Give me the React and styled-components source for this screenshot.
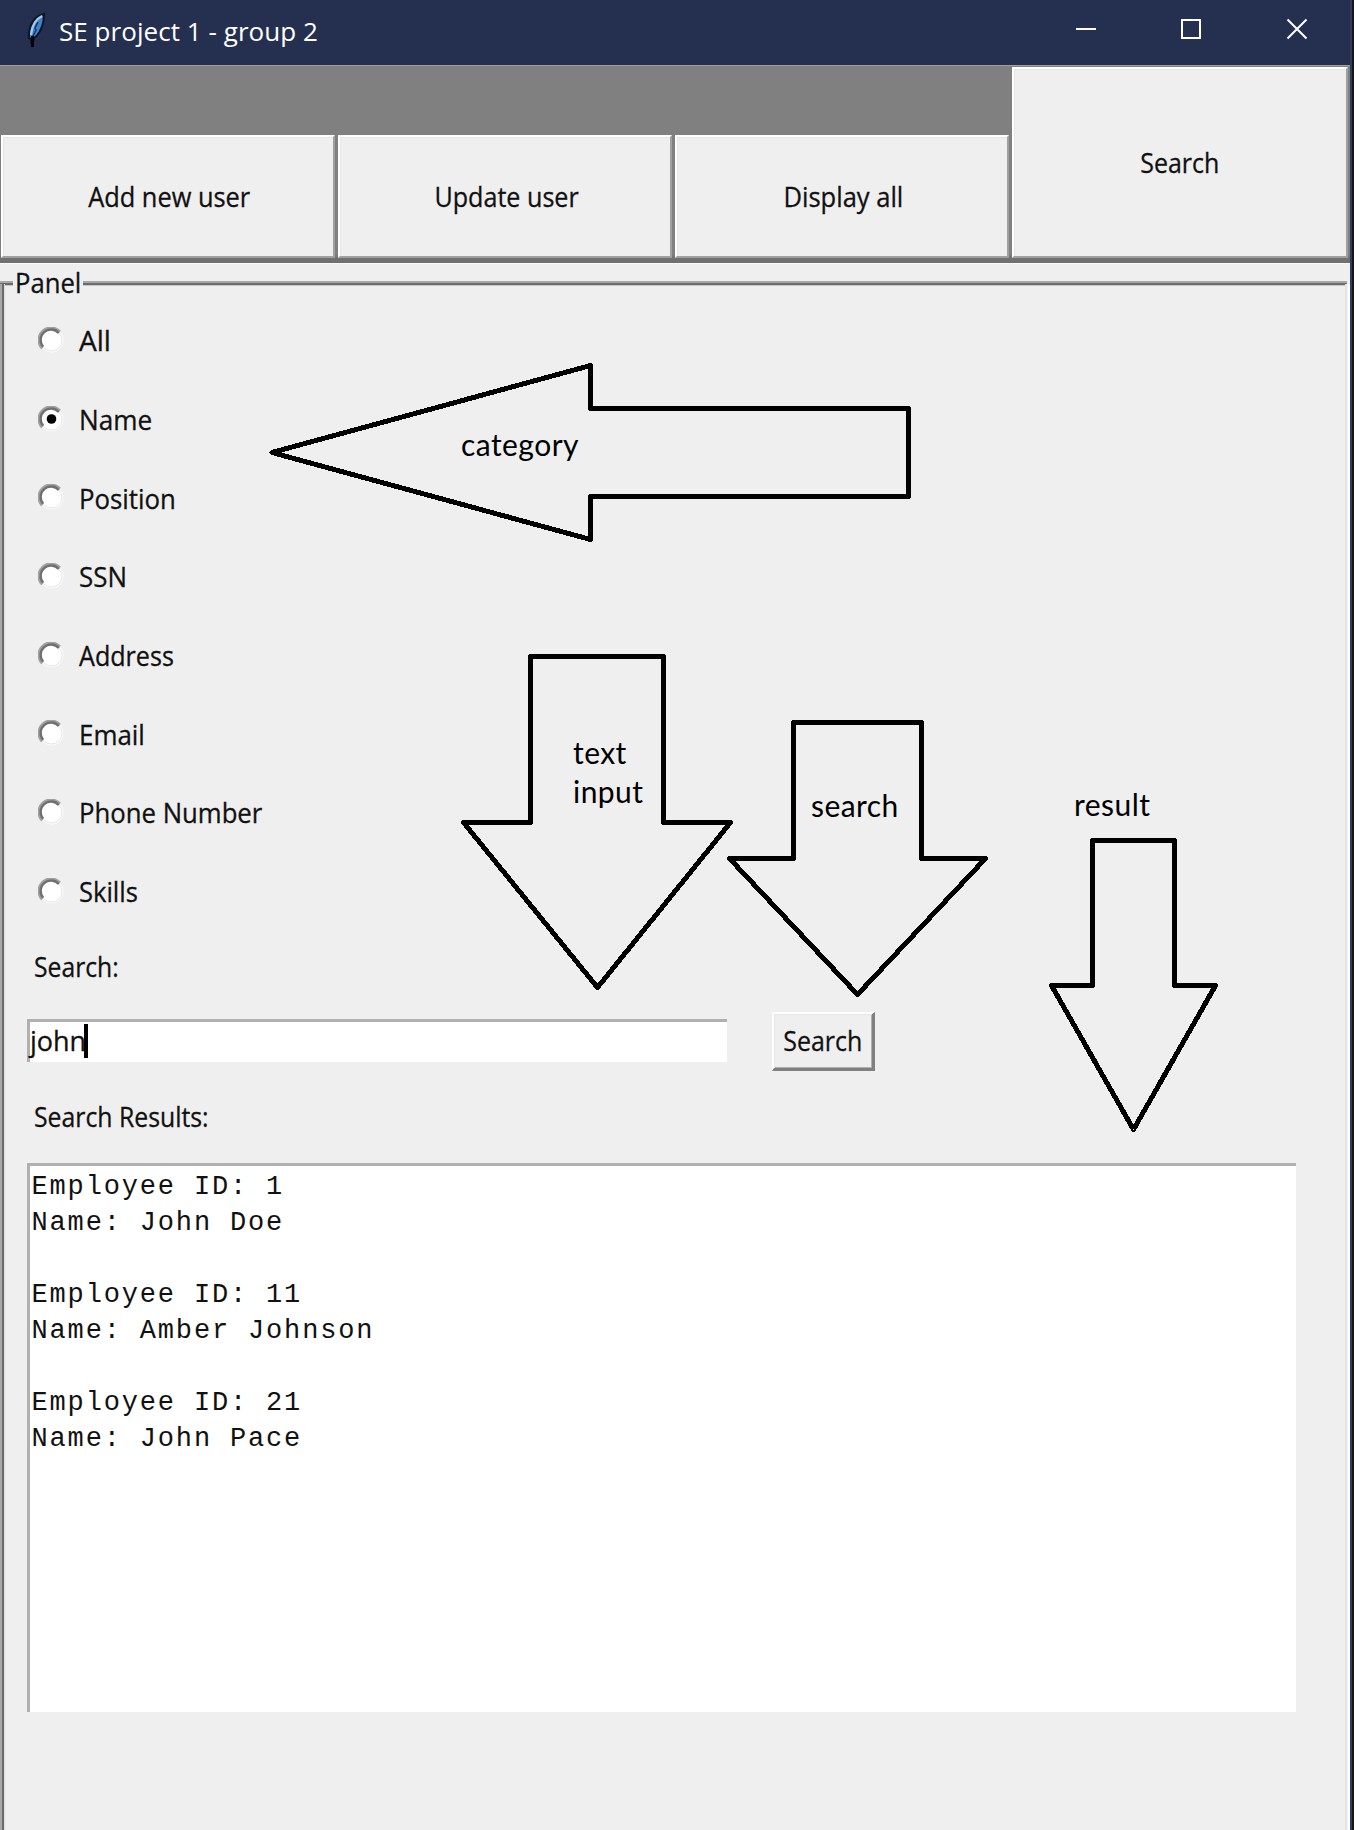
import React from "react";
import styled, { createGlobalStyle } from "styled-components";

const GlobalStyle = createGlobalStyle`
  * { box-sizing: border-box; }
  html, body { margin: 0; padding: 0; background: #141414; }
  body { width: 1354px; height: 1830px; overflow: hidden; }
`;

const Screen = styled.div`
  display: flex;
  width: 1354px;
  height: 1830px;
  background: #161616;
  font-family: "Open Sans", "Noto Sans", sans-serif;
  font-size: 27px;
  line-height: 36px;
  color: #111;
`;

const Window = styled.div`
  position: relative;
  display: flex;
  flex-direction: column;
  width: 1352px;
  height: 1830px;
  border-right: 2px solid #2f3c5e;
  background: #efefef;
`;

const TitleBar = styled.header`
  display: flex;
  align-items: center;
  height: 65px;
  flex: none;
  padding: 0 42px 0 24px;
  background: #253050;
  color: #fff;
`;

const FeatherIcon = styled.svg`
  width: 24px;
  height: 38px;
  margin-top: -5px;
`;

const Title = styled.h1`
  flex: 1;
  margin: -3px 0 0 11px;
  font-size: 26px;
  font-weight: 400;
  line-height: 36px;
  letter-spacing: 0.05px;
`;

const WindowControls = styled.div`
  display: flex;
  gap: 84px;
  margin-top: -7px;
`;

const ControlIcon = styled.svg`
  width: 22px;
  height: 22px;
  fill: none;
  stroke: #fff;
  stroke-width: 2;
`;

const Fit = styled.span`
  display: inline-block;
  white-space: pre;
  -webkit-text-stroke: 0.3px currentColor;
  transform: scaleX(${(p) => p.$x || 1});
  transform-origin: ${(p) => p.$from || "left"} center;
`;

const Toolbar = styled.nav`
  display: grid;
  grid-template-columns: 337px 337px 337px 337px;
  align-items: end;
  flex: none;
  height: 199px;
  padding: 1px 2px 5px 0;
  border-top: 1px solid #a0a0a0;
  border-bottom: 1px solid #fafafa;
  background: linear-gradient(#808080 188px, #707070 192px);
`;

const RaisedButton = styled.button`
  display: flex;
  align-items: center;
  justify-content: center;
  padding: 0;
  border: 2px solid #fff;
  border-right-color: #a0a0a0;
  border-bottom-color: #a0a0a0;
  background: #efefef;
  box-shadow: inset 1px 1px 0 #e6e6e6;
  color: inherit;
  font: inherit;
`;

const ToolButton = styled(RaisedButton)`
  height: ${(p) => (p.$tall ? 191 : 123)}px;
  margin-left: 1px;
  margin-right: ${(p) => (p.$tall ? 0 : 2)}px;
  padding: ${(p) => (p.$tall ? "0" : "1px 0 0 3px")};
`;

const Panel = styled.section`
  display: flex;
  flex-direction: column;
  flex: 1;
`;

const PanelHeader = styled.div`
  display: flex;
  align-items: center;
  height: 37px;
`;

const Rule = styled.span`
  height: 5px;
  margin-top: 2px;
  width: ${(p) => p.$w || "auto"};
  flex: ${(p) => (p.$w ? "none" : 1)};
  background: linear-gradient(#a8a8a8 2px, #6c6c6c 2px, #6c6c6c 4px, #c8c8c8 4px);
`;

const PanelTitle = styled.h2`
  width: 70px;
  padding-left: 2px;
  margin: 0;
  font-size: inherit;
  font-weight: 400;
`;

const HeaderEnd = styled.span`
  width: 3px;
`;

const PanelBody = styled.div`
  display: flex;
  flex: 1;
  margin-top: -17px;
`;

const LeftEdge = styled.div`
  width: 5px;
  background: linear-gradient(90deg, #a8a8a8 2px, #6c6c6c 2px, #6c6c6c 4px, #dcdcdc 4px);
`;

const RightEdge = styled.div`
  width: 5px;
  background: linear-gradient(90deg, #e4e4e4 2px, #fff 3px);
`;

const Content = styled.div`
  flex: 1;
  padding: 18px 0 0 22px;
`;

const RadioList = styled.div`
  display: grid;
  grid-template-rows: repeat(8, 78.7px);
  padding-left: 11px;
`;

const RadioRow = styled.label`
  display: flex;
  align-items: center;
  gap: 14.5px;
`;

const RadioGlyph = styled.svg`
  width: 26px;
  height: 26px;
  margin-top: -3px;
`;

const FieldLabel = styled.div`
  height: 36px;
  margin-top: ${(p) => p.$top}px;
  padding-left: 7px;
`;

const SearchRow = styled.div`
  display: flex;
  align-items: flex-start;
  height: 59px;
  margin-top: 27px;
`;

const Entry = styled.div`
  display: flex;
  align-items: center;
  width: 700px;
  height: 43px;
  margin: 7px 45px 0 0;
  padding-bottom: 2px;
  border: solid #b0b0b0;
  border-width: 3px 0 0 3px;
  background: #fff;
`;

const Caret = styled.span`
  width: 4px;
  height: 34px;
  margin-left: -2px;
  background: #000;
`;

const SearchButton = styled(RaisedButton)`
  width: 103px;
  height: 59px;
  border-width: 2px 3px 3px 2px;
  border-right-color: #808080;
  border-bottom-color: #808080;
  box-shadow: inset 1px 1px 0 #e6e6e6, inset -1px -1px 0 #b0b0b0;
`;

const Results = styled.pre`
  width: 1269px;
  height: 549px;
  margin: 28px 0 0;
  padding: 3px 0 0 1.5px;
  border: solid #b0b0b0;
  border-width: 3px 0 0 3px;
  background: #fff;
  font-family: "Liberation Mono", monospace;
  font-size: 27px;
  letter-spacing: 1.84px;
  line-height: 36px;
`;

const Annotations = styled.div`
  position: absolute;
  inset: 0;
  pointer-events: none;
`;

const ArrowLayer = styled.svg`
  position: absolute;
  inset: 0;
  width: 1350px;
  height: 1830px;
  fill: none;
  stroke: #000;
  stroke-width: 5;
  stroke-linejoin: round;
  shape-rendering: crispEdges;
`;

const Note = styled.span`
  position: absolute;
  left: ${(p) => p.$x}px;
  top: ${(p) => p.$y}px;
  color: #000;
  font-family: Lato, sans-serif;
  font-size: 30px;
  line-height: 39px;
  letter-spacing: 0.45px;
  white-space: pre;
`;

const CATEGORIES = [
  ["All", 1.04],
  ["Name", 0.97],
  ["Position", 0.955],
  ["SSN", 0.96],
  ["Address", 0.93],
  ["Email", 0.96],
  ["Phone Number", 0.953],
  ["Skills", 0.945],
];

const RESULTS = [
  [1, "John Doe"],
  [11, "Amber Johnson"],
  [21, "John Pace"],
];

const ARROWS = [
  "272,452.5 590.5,365.5 590.5,408.5 908.5,408.5 908.5,496.5 590.5,496.5 590.5,539.5",
  "530.5,656.5 663.5,656.5 663.5,822.5 730.5,822.5 597.5,987.5 463.5,822.5 530.5,822.5",
  "793.5,722.5 921.5,722.5 921.5,858.5 985.5,858.5 857.5,994.5 729.5,858.5 793.5,858.5",
  "1092.5,840.5 1174.5,840.5 1174.5,985.5 1215.5,985.5 1133.5,1129.5 1051.5,985.5 1092.5,985.5",
];

function Radio({ checked }) {
  return (
    <RadioGlyph viewBox="0 0 26 26">
      <circle cx="13.5" cy="13.5" r="12" fill="#fafafa" />
      <circle cx="13.5" cy="13.5" r="10.5" fill="#fff" stroke="#e6e6e6" strokeWidth="1" />
      <path d="M4 21.5 A11.6 11.6 0 0 1 22 4.5" fill="none" stroke="#a0a0a0" strokeWidth="2.4" />
      <path d="M5.2 19.8 A10 10 0 0 1 20.8 6" fill="none" stroke="#707070" strokeWidth="2.4" />
      {checked && <circle cx="13.5" cy="13" r="4.8" fill="#000" />}
    </RadioGlyph>
  );
}

function Feather() {
  return (
    <FeatherIcon viewBox="0 0 24 38">
      <path d="M20 3 C14 4 9 9 6.500 15 C4.500 20 4.500 23 5 27 L7 28 L8 36 L10 27 C14 25 18 18 19.500 10Z" fill="#3f82cf" stroke="#10141f" strokeWidth="2" />
      <path d="M18 5 C12 8 8 14 7 24" fill="none" stroke="#a5c8e6" strokeWidth="2.200" />
      <path d="M14 11 L11 17 L12 19 L8.500 26" fill="none" stroke="#1c355c" strokeWidth="1.500" />
      <path d="M8.500 25 V36" fill="none" stroke="#020306" strokeWidth="3" />
    </FeatherIcon>
  );
}

export default function App() {
  return (
    <>
      <GlobalStyle />
      <Screen>
        <Window>
          <TitleBar>
            <Feather />
            <Title>SE project 1 - group 2</Title>
            <WindowControls>
              <ControlIcon viewBox="0 0 22 22"><path d="M2 11H22" /></ControlIcon>
              <ControlIcon viewBox="0 0 22 22"><rect x="2" y="2" width="18" height="18" /></ControlIcon>
              <ControlIcon viewBox="0 0 22 22"><path d="M1.500 1.500L20.500 20.500M20.500 1.500L1.500 20.500" /></ControlIcon>
            </WindowControls>
          </TitleBar>
          <Toolbar>
            <ToolButton><Fit $x={0.94} $from="center">Add new user</Fit></ToolButton>
            <ToolButton><Fit $x={0.93} $from="center">Update user</Fit></ToolButton>
            <ToolButton><Fit $x={0.945} $from="center">Display all</Fit></ToolButton>
            <ToolButton $tall><Fit $x={0.925} $from="center">Search</Fit></ToolButton>
          </Toolbar>
          <Panel>
            <PanelHeader>
              <Rule $w="13px" />
              <PanelTitle><Fit $x={0.95}>Panel</Fit></PanelTitle>
              <Rule />
              <HeaderEnd />
            </PanelHeader>
            <PanelBody>
              <LeftEdge />
              <Content>
                <RadioList>
                  {CATEGORIES.map(([name, x]) => (
                    <RadioRow key={name}>
                      <Radio checked={name === "Name"} />
                      <Fit $x={x}>{name}</Fit>
                    </RadioRow>
                  ))}
                </RadioList>
                <FieldLabel $top={17}><Fit $x={0.915}>Search:</Fit></FieldLabel>
                <SearchRow>
                  <Entry>
                    <Fit>john</Fit>
                    <Caret />
                  </Entry>
                  <SearchButton><Fit $x={0.925} $from="center">Search</Fit></SearchButton>
                </SearchRow>
                <FieldLabel $top={28}><Fit $x={0.918}>Search Results:</Fit></FieldLabel>
                <Results>
                  {RESULTS.map(([id, name]) => `Employee ID: ${id}\nName: ${name}`).join("\n\n")}
                </Results>
              </Content>
              <RightEdge />
            </PanelBody>
          </Panel>
          <Annotations>
            <ArrowLayer viewBox="0 0 1350 1830">
              {ARROWS.map((points) => <polygon key={points} points={points} />)}
            </ArrowLayer>
            <Note $x={461} $y={425}>category</Note>
            <Note $x={573} $y={733}>{"text\ninput"}</Note>
            <Note $x={811} $y={786}>search</Note>
            <Note $x={1074} $y={785}>result</Note>
          </Annotations>
        </Window>
      </Screen>
    </>
  );
}
